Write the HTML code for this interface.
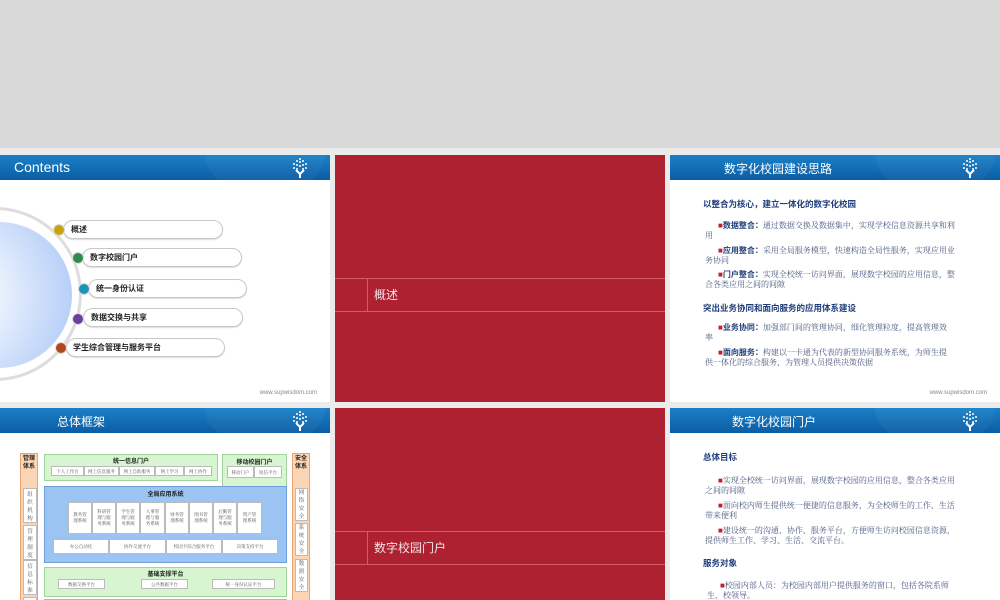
<!DOCTYPE html>
<html><head><meta charset="utf-8"><style>
*{margin:0;padding:0;box-sizing:border-box}
body{width:1000px;height:600px;overflow:hidden;background:#ebebeb;position:relative;font-family:"Liberation Sans","Noto Sans CJK SC",sans-serif}
.a{position:absolute}
.slide{position:absolute;background:#fff;overflow:hidden}
.hdr{position:absolute;left:0;top:0;right:0;height:25px;background:linear-gradient(#1b80c8,#0b5da3);overflow:hidden}
.hdr:after{content:"";position:absolute;left:62%;top:-40px;width:120px;height:80px;border-radius:50%;background:rgba(255,255,255,.04)}
.ht{position:absolute;color:#fff;font-size:12px;top:5px;white-space:nowrap}
.logo{position:absolute;right:20px;top:2px}
.red{position:absolute;background:#ad2131}
.hl{position:absolute;left:0;right:0;height:1px;background:#d45a66}
.foot{position:absolute;right:13px;font-size:6px;color:#888;font-family:"Liberation Sans",sans-serif}
.pill{position:absolute;height:19px;border:1px solid #c8c8c8;border-radius:10px;background:#fff;font-size:8px;font-weight:bold;line-height:17px;color:#222;box-shadow:0 1px 1px #ddd}
.dot{position:absolute;width:12px;height:12px;border-radius:50%;border:1.5px solid #ddd}
.t{position:absolute;font-size:8px;color:#4a5a80;font-family:"Liberation Serif","Noto Serif CJK SC",serif;line-height:10px;white-space:nowrap}
.h{position:absolute;font-size:8.5px;font-weight:bold;color:#1f3d7a;white-space:nowrap}
.b{color:#c0202f}
.bb{font-weight:bold;color:#1f3d7a;font-family:"Liberation Sans","Noto Sans CJK SC",sans-serif}
.or{position:absolute;background:#fcd5b4;border:1px solid #e9a56f}
.gr{position:absolute;background:#d7f5d0;border:1px solid #9fd49a}
.bl{position:absolute;background:#9cc4f2;border:1px solid #6f9fd8}
.wb{position:absolute;background:#fff;border:1px solid #bbb;font-size:4.5px;color:#555;text-align:center;font-family:"Liberation Serif","Noto Serif CJK SC",serif}
.lb{position:absolute;font-size:6px;font-weight:bold;color:#222;text-align:center;white-space:nowrap}
</style></head><body>
<div class="a" style="left:0;top:0;width:1000px;height:148px;background:#d9d9d9"></div>

<svg width="0" height="0" style="position:absolute"><defs><g id="lg" fill="#fff"><circle cx="10" cy="2" r="1"/><circle cx="7" cy="4" r="1"/><circle cx="13" cy="4" r="1"/><circle cx="10" cy="5" r="1"/><circle cx="4" cy="7" r="1"/><circle cx="16" cy="7" r="1"/><circle cx="7" cy="8" r="1"/><circle cx="13" cy="8" r="1"/><circle cx="4" cy="11" r="1"/><circle cx="16" cy="11" r="1"/><circle cx="7" cy="12" r="1"/><circle cx="13" cy="12" r="1"/><circle cx="10" cy="9" r="1"/><path d="M6 13 L10 17 L14 13 M10 17 V21" stroke="#fff" stroke-width="2" fill="none"/></g></defs></svg>

<!-- Slide 1 -->
<div class="slide" style="left:0;top:155px;width:330px;height:247px">
 <div class="hdr"><div class="ht" style="left:14px;top:4px;font-size:14px">Contents</div><svg class="logo" width="20" height="22"><use href="#lg"/></svg></div>
 <div class="a" style="left:-92px;top:52px;width:174px;height:174px;border-radius:50%;border:3px solid #ddd"></div>
 <div class="a" style="left:-74px;top:67px;width:146px;height:146px;border-radius:50%;background:radial-gradient(circle at 20% 50%,#fff 10%,#a9c6f7 100%)"></div>
 <div class="pill" style="left:63px;top:65px;width:160px;padding-left:7px">概述</div>
 <div class="dot" style="left:53px;top:69px;background:#c9a30e"></div>
 <div class="pill" style="left:82px;top:93px;width:160px;padding-left:7px">数字校园门户</div>
 <div class="dot" style="left:72px;top:97px;background:#2e8b4c"></div>
 <div class="pill" style="left:88px;top:124px;width:159px;padding-left:7px">统一身份认证</div>
 <div class="dot" style="left:78px;top:128px;background:#1e93b8"></div>
 <div class="pill" style="left:83px;top:153px;width:160px;padding-left:7px">数据交换与共享</div>
 <div class="dot" style="left:72px;top:158px;background:#6a3fa0"></div>
 <div class="pill" style="left:66px;top:183px;width:159px;padding-left:6px">学生综合管理与服务平台</div>
 <div class="dot" style="left:55px;top:187px;background:#b5451b"></div>
 <div class="foot" style="top:235px">www.supwisdom.com</div>
</div>

<!-- Slide 2 red -->
<div class="red" style="left:335px;top:155px;width:330px;height:247px">
 <div class="hl" style="top:123px"></div><div class="hl" style="top:156px"></div>
 <div class="a" style="left:32px;top:123px;width:1px;height:33px;background:#d45a66"></div>
 <div class="a" style="left:39px;top:131px;color:#f3e4e6;font-size:12px">概述</div>
</div>

<!-- Slide 3 -->
<div class="slide" style="left:670px;top:155px;width:330px;height:247px">
 <div class="hdr"><div class="ht" style="left:54px">数字化校园建设思路</div><svg class="logo" width="20" height="22"><use href="#lg"/></svg></div>
 <div class="h" style="left:33px;top:43px">以整合为核心，建立一体化的数字化校园</div>
 <div class="t" style="left:48px;top:66px"><span class="b">■</span><span class="bb">数据整合：</span>通过数据交换及数据集中，实现学校信息资源共享和利</div>
 <div class="t" style="left:35px;top:76px">用</div>
 <div class="t" style="left:48px;top:91px"><span class="b">■</span><span class="bb">应用整合：</span>采用全局服务模型，快速构造全局性服务，实现应用业</div>
 <div class="t" style="left:35px;top:101px">务协同</div>
 <div class="t" style="left:48px;top:115px"><span class="b">■</span><span class="bb">门户整合：</span>实现全校统一访问界面，展现数字校园的应用信息，整</div>
 <div class="t" style="left:35px;top:125px">合各类应用之间的间隙</div>
 <div class="h" style="left:33px;top:147px">突出业务协同和面向服务的应用体系建设</div>
 <div class="t" style="left:48px;top:168px"><span class="b">■</span><span class="bb">业务协同：</span>加强部门间的管理协同，细化管理粒度，提高管理效</div>
 <div class="t" style="left:35px;top:178px">率</div>
 <div class="t" style="left:48px;top:193px"><span class="b">■</span><span class="bb">面向服务：</span>构建以一卡通为代表的新型协同服务系统，为师生提</div>
 <div class="t" style="left:35px;top:203px">供一体化的综合服务，为管理人员提供决策依据</div>
 <div class="foot" style="top:235px">www.supwisdom.com</div>
</div>

<!-- Slide 4 -->
<div class="slide" style="left:0;top:408px;width:330px;height:192px">
 <div class="hdr"><div class="ht" style="left:57px">总体框架</div><svg class="logo" width="20" height="22"><use href="#lg"/></svg></div>
 <div class="or" style="left:20px;top:45px;width:18px;height:150px"></div>
 <div class="lb" style="left:20px;top:47px;width:18px;line-height:8px">管理<br>体系</div>
 <div class="wb" style="left:23px;top:80px;width:14px;height:35px;font-size:5.5px;line-height:8px;padding-top:2px">组<br>织<br>机<br>构</div>
 <div class="wb" style="left:23px;top:117px;width:14px;height:35px;font-size:5.5px;line-height:8px;padding-top:2px">管<br>理<br>制<br>度</div>
 <div class="wb" style="left:23px;top:152px;width:14px;height:35px;font-size:5.5px;line-height:8px;padding-top:2px">信<br>息<br>标<br>准</div>
 <div class="wb" style="left:23px;top:189px;width:14px;height:10px"></div>
 <div class="or" style="left:292px;top:45px;width:18px;height:150px"></div>
 <div class="lb" style="left:292px;top:47px;width:18px;line-height:8px">安全<br>体系</div>
 <div class="wb" style="left:295px;top:80px;width:13px;height:33px;font-size:5.5px;line-height:8px">网<br>络<br>安<br>全</div>
 <div class="wb" style="left:295px;top:115px;width:13px;height:33px;font-size:5.5px;line-height:8px">系<br>统<br>安<br>全</div>
 <div class="wb" style="left:295px;top:151px;width:13px;height:33px;font-size:5.5px;line-height:8px">数<br>据<br>安<br>全</div>
 <div class="gr" style="left:44px;top:46px;width:174px;height:27px"></div>
 <div class="lb" style="left:44px;top:48px;width:174px">统一信息门户</div>
 <div class="a" style="left:51px;top:58px;display:flex">
  <div class="wb" style="position:static;width:33px;height:10px;line-height:9px">个人工作台</div><div class="wb" style="position:static;width:35px;height:10px;line-height:9px">网上信息服务</div><div class="wb" style="position:static;width:36px;height:10px;line-height:9px">网上自助服务</div><div class="wb" style="position:static;width:29px;height:10px;line-height:9px">网上学习</div><div class="wb" style="position:static;width:28px;height:10px;line-height:9px">网上协作</div></div>
 <div class="gr" style="left:222px;top:46px;width:65px;height:35px"></div>
 <div class="lb" style="left:222px;top:49px;width:65px">移动校园门户</div>
 <div class="a" style="left:227px;top:58px;display:flex"><div class="wb" style="position:static;width:27px;height:12px;line-height:11px">移动门户</div><div class="wb" style="position:static;width:28px;height:12px;line-height:11px">短信平台</div></div>
 <div class="bl" style="left:44px;top:78px;width:243px;height:77px"></div>
 <div class="lb" style="left:44px;top:81px;width:243px">全局应用系统</div>
 <div class="a" style="left:68px;top:94px;display:flex">
  <div class="wb" style="position:static;width:24px;height:32px;padding-top:9px;line-height:6px">教务管<br>理系统</div><div class="wb" style="position:static;width:24px;height:32px;padding-top:6px;line-height:6px">科研管<br>理与服<br>务系统</div><div class="wb" style="position:static;width:24px;height:32px;padding-top:6px;line-height:6px">学生管<br>理与服<br>务系统</div><div class="wb" style="position:static;width:25px;height:32px;padding-top:6px;line-height:6px">人事管<br>理与服<br>务系统</div><div class="wb" style="position:static;width:24px;height:32px;padding-top:9px;line-height:6px">财务管<br>理系统</div><div class="wb" style="position:static;width:24px;height:32px;padding-top:9px;line-height:6px">图书管<br>理系统</div><div class="wb" style="position:static;width:24px;height:32px;padding-top:6px;line-height:6px">后勤管<br>理与服<br>务系统</div><div class="wb" style="position:static;width:25px;height:32px;padding-top:9px;line-height:6px">资产管<br>理系统</div></div>
 <div class="a" style="left:53px;top:131px;display:flex">
  <div class="wb" style="position:static;width:56px;height:15px;line-height:14px">办公自动化</div><div class="wb" style="position:static;width:57px;height:15px;line-height:14px">协作交流平台</div><div class="wb" style="position:static;width:56px;height:15px;line-height:14px">校园卡综合服务平台</div><div class="wb" style="position:static;width:56px;height:15px;line-height:14px">决策支持平台</div></div>
 <div class="gr" style="left:44px;top:159px;width:243px;height:30px"></div>
 <div class="lb" style="left:44px;top:161px;width:243px">基础支撑平台</div>
 <div class="wb" style="left:58px;top:171px;width:47px;height:10px;line-height:9px">数据交换平台</div>
 <div class="wb" style="left:141px;top:171px;width:47px;height:10px;line-height:9px">公共数据平台</div>
 <div class="wb" style="left:212px;top:171px;width:63px;height:10px;line-height:9px">统一身份认证平台</div>
 <div class="or" style="left:44px;top:191px;width:243px;height:5px"></div>
</div>

<!-- Slide 5 red -->
<div class="red" style="left:335px;top:408px;width:330px;height:192px">
 <div class="hl" style="top:123px"></div><div class="hl" style="top:156px"></div>
 <div class="a" style="left:32px;top:123px;width:1px;height:33px;background:#d45a66"></div>
 <div class="a" style="left:39px;top:131px;color:#f3e4e6;font-size:12px">数字校园门户</div>
</div>

<!-- Slide 6 -->
<div class="slide" style="left:670px;top:408px;width:330px;height:192px">
 <div class="hdr"><div class="ht" style="left:62px">数字化校园门户</div><svg class="logo" width="20" height="22"><use href="#lg"/></svg></div>
 <div class="h" style="left:33px;top:43px">总体目标</div>
 <div class="t" style="left:48px;top:68px"><span class="b">■</span>实现全校统一访问界面，展现数字校园的应用信息，整合各类应用</div>
 <div class="t" style="left:35px;top:78px">之间的间隙</div>
 <div class="t" style="left:48px;top:93px"><span class="b">■</span>面向校内师生提供统一便捷的信息服务，为全校师生的工作、生活</div>
 <div class="t" style="left:35px;top:103px">带来便利</div>
 <div class="t" style="left:48px;top:118px"><span class="b">■</span>建设统一的沟通、协作、服务平台，方便师生访问校园信息资源，</div>
 <div class="t" style="left:35px;top:128px">提供师生工作、学习、生活、交流平台。</div>
 <div class="h" style="left:33px;top:149px">服务对象</div>
 <div class="t" style="left:50px;top:173px"><span class="b">■</span>校园内部人员：为校园内部用户提供服务的窗口，包括各院系师</div>
 <div class="t" style="left:37px;top:183px">生、校领导。</div>
</div>
</body></html>
